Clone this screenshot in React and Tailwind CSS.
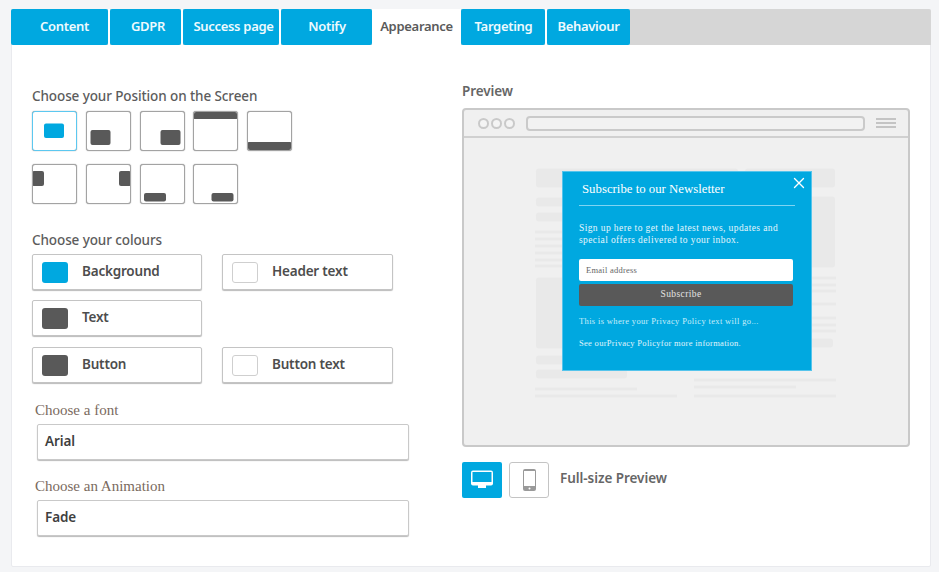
import React from "react";
import { X } from "lucide-react";

const BLUE = "#00a8e0";
const DARK = "#595959";

const TABS = [
  { label: "Content", w: "w-[97px]", pl: "pl-[10px]", gap: true },
  { label: "GDPR", w: "w-[71px]", pl: "pl-[5px]", gap: true },
  { label: "Success page", w: "w-[96px]", pl: "pl-[5px]", gap: true },
  { label: "Notify", w: "w-[91px]", pl: "pl-[1px]" },
  { label: "Appearance", w: "w-[89px]", active: true },
  { label: "Targeting", w: "w-[84px]", pl: "pl-[1px]", gap: true },
  { label: "Behaviour", w: "w-[83px]" },
];

// x, y, w, h of the dark block inside each 45x40 tile
const TILES_TOP = [
  { r: [12, 12.5, 20, 14.5], active: true },
  { r: [4.5, 19, 20, 15] },
  { r: [20.5, 19, 20, 15] },
  { r: [0, 0, 45, 8] },
  { r: [0, 31, 45, 9] },
];
const TILES_BOTTOM = [
  { r: [0, 7, 12, 15] },
  { r: [33, 7, 12, 15] },
  { r: [4, 29, 22, 8.5] },
  { r: [18.5, 29, 22, 8.5] },
];

function Tile({ r, active }) {
  return (
    <button
      className={`w-[45px] h-[40px] bg-white rounded-[3px] overflow-hidden border shadow-[0_0_1px_#777] ${
        active ? "border-[#5cc8f0]" : "border-[#a3a3a3]"
      }`}
    >
      <svg width="45" height="40" viewBox="0 0 45 40" className="block -m-px">
        <rect x={r[0]} y={r[1]} width={r[2]} height={r[3]} rx="2" fill={active ? BLUE : DARK} />
      </svg>
    </button>
  );
}

function ColourBtn({ label, colour }) {
  return (
    <div className="w-full h-[36px] flex items-center bg-white border border-[#c4c4c4] rounded-[2px] shadow-[0_1px_1px_#bbb]">
      <span
        className={`w-[26px] h-[21px] ml-[9px] rounded-[3px] ${colour ? "" : "border border-[#cfcfcf]"}`}
        style={colour ? { background: colour } : undefined}
      />
      <span className="ml-[14px] pb-[1px] text-[13.5px] font-semibold text-[#4d4d4d] tracking-[-0.2px]">{label}</span>
    </div>
  );
}

function SelectBox({ value }) {
  return (
    <div className="ml-[5px] w-[372px] h-[36px] flex items-center pl-[7px] pb-[1px] bg-white border border-[#c9c9c9] rounded-[2px] shadow-[0_1px_1px_#bbb] text-[13.5px] font-semibold text-[#3f3f3f] tracking-[-0.1px]">
      {value}
    </div>
  );
}

// faint page wireframe behind the popup, in page coordinates
function Wireframe() {
  const blocks = [
    [536, 168, 202, 19], [745, 168, 90, 19], [536, 197, 90, 9], [536, 212, 90, 9], [745, 196, 90, 71],
    [536, 277, 90, 71], [536, 355, 90, 9], [536, 369, 91, 9], [740, 338, 93, 9],
  ];
  const lines = [
    [535, 230, 60], [535, 237, 60], [535, 244, 60], [535, 251, 60], [535, 258, 60], [535, 264, 60],
    [535, 387, 102], [535, 394, 142], [780, 276, 56], [780, 283, 56], [780, 289, 56], [780, 302, 56],
    [780, 316, 56], [780, 323, 56], [780, 329, 56], [694, 378, 142], [694, 385, 102], [694, 394, 142],
  ];
  return (
    <svg viewBox="464 138 444 306" className="absolute inset-0 w-full h-full">
      {blocks.map((b, i) => (
        <rect key={i} x={b[0]} y={b[1]} width={b[2]} height={b[3]} rx="3" fill="#e9e9e9" />
      ))}
      {lines.map((l, i) => (
        <rect key={i} x={l[0]} y={l[1]} width={l[2]} height="3" fill="#e9e9e9" />
      ))}
    </svg>
  );
}

function Popup() {
  const serif = { fontFamily: '"Liberation Serif", serif' };
  return (
    <div
      className="absolute left-[98px] top-[33px] w-[250px] h-[200px] bg-[#00a8e0] border border-[#55c4ec] text-white pl-[16px] pr-[18px]"
      style={serif}
    >
      <X className="absolute right-[3px] top-[2px] w-[18px] h-[18px]" strokeWidth={1.8} />
      <div className="h-[34px] pl-[3px] pt-[2px] flex items-center text-[12.8px] border-b border-[#7fd4f2] mr-[-2px]">
        Subscribe to our Newsletter
      </div>
      <p className="mt-[16px] text-[9.5px] leading-[12px] tracking-[0.4px] text-[#e6f6fc]">
        Sign up here to get the latest news, updates and special offers delivered to your inbox.
      </p>
      <div className="mt-[13px] h-[22px] bg-white rounded-[2px] flex items-center pl-[7px] text-[8.5px] tracking-[0.25px] text-[#666]">
        Email address
      </div>
      <div className="mt-[3px] pb-[2px] pr-[10px] h-[22px] bg-[#595959] rounded-[2px] flex items-center justify-center text-[9.5px] tracking-[0.4px] text-[#e4e4e4]">
        Subscribe
      </div>
      <p className="mt-[10px] text-[8.5px] tracking-[0.35px] leading-[11px] text-[#c9eefb]">
        This is where your Privacy Policy text will go...
      </p>
      <p className="mt-[11px] text-[8.5px] tracking-[0.3px] leading-[11px] text-[#e0f5fc]">
        See ourPrivacy Policyfor more information.
      </p>
    </div>
  );
}

function BrowserFrame() {
  return (
    <div className="w-[448px] h-[339px] flex flex-col bg-[#f0f0f0] border-2 border-[#c9c9c9] rounded-[4px]">
      <div className="h-[28px] shrink-0 flex items-center border-b-2 border-[#d0d0d0] pl-[14px] pr-[12px]">
        <span className="w-[11px] h-[11px] rounded-full bg-[#f4f4f4] border-2 border-[#c9c9c9]" />
        <span className="ml-[2px] w-[11px] h-[11px] rounded-full bg-[#f4f4f4] border-2 border-[#c9c9c9]" />
        <span className="ml-[2px] w-[11px] h-[11px] rounded-full bg-[#f4f4f4] border-2 border-[#c9c9c9]" />
        <span className="ml-[11px] flex-1 h-[15px] rounded-[4px] bg-[#f2f2f2] border-2 border-[#cacaca]" />
        <span className="ml-[11px] w-[20px] flex flex-col gap-[2px]">
          <span className="h-[2px] bg-[#c4c4c4]" />
          <span className="h-[2px] bg-[#c4c4c4]" />
          <span className="h-[2px] bg-[#c4c4c4]" />
        </span>
      </div>
      <div className="relative flex-1">
        <Wireframe />
        <Popup />
      </div>
    </div>
  );
}

export default function App() {
  return (
    <div
      className="w-[939px] h-[572px] overflow-hidden bg-[#f4f5f7] pt-[9px] pl-[11px]"
      style={{ fontFamily: '"Noto Sans", sans-serif' }}
    >
      <div className="w-[920px] h-[558px] bg-white border border-[#e9eaee] rounded-[2px]">
        {/* tabs */}
        <div className="h-[36px] -mx-px -mt-px flex bg-[#d6d6d6] rounded-t-[2px]">
          {TABS.map((t) => (
            <React.Fragment key={t.label}>
              <div
                className={`${t.w} ${t.pl || ""} h-full shrink-0 flex items-center justify-center text-[13px] font-semibold whitespace-nowrap tracking-[-0.3px] ${
                  t.active ? "bg-white text-[#5a5a5a]" : "bg-[#00a8e0] text-[#eefafe] rounded-[2px]"
                }`}
              >
                {t.label}
              </div>
              {t.gap && <span className="w-[2px] shrink-0 bg-white" />}
            </React.Fragment>
          ))}
        </div>

        <div className="flex pl-[20px]">
          {/* settings */}
          <div className="w-[430px] shrink-0 pt-[41px]">
            <h2 className="h-[20px] leading-[20px] text-[13.5px] font-medium text-[#5c5c5c] tracking-[-0.1px]">
              Choose your Position on the Screen
            </h2>
            <div className="mt-[5px] flex gap-[8.75px]">
              {TILES_TOP.map((t, i) => (
                <Tile key={i} {...t} />
              ))}
            </div>
            <div className="mt-[13px] flex gap-[8.75px]">
              {TILES_BOTTOM.map((t, i) => (
                <Tile key={i} {...t} />
              ))}
            </div>

            <h2 className="mt-[26px] h-[20px] leading-[20px] text-[13.5px] font-medium text-[#5c5c5c] tracking-[-0.1px]">
              Choose your colours
            </h2>
            <div className="mt-[4px] grid grid-cols-[170px_171px] gap-x-[20px]">
              <ColourBtn label="Background" colour={BLUE} />
              <ColourBtn label="Header text" />
              <div className="mt-[10px] col-span-2 w-[170px]">
                <ColourBtn label="Text" colour={DARK} />
              </div>
              <div className="mt-[11px]">
                <ColourBtn label="Button" colour={DARK} />
              </div>
              <div className="mt-[11px]">
                <ColourBtn label="Button text" />
              </div>
            </div>

            <div
              className="mt-[18px] ml-[3px] h-[18px] leading-[18px] text-[15px] text-[#7a6a5e]"
              style={{ fontFamily: '"Liberation Serif", serif' }}
            >
              Choose a font
            </div>
            <div className="mt-[5px]">
              <SelectBox value="Arial" />
            </div>
            <div
              className="mt-[17px] ml-[3px] h-[18px] leading-[18px] text-[15px] text-[#7a6a5e]"
              style={{ fontFamily: '"Liberation Serif", serif' }}
            >
              Choose an Animation
            </div>
            <div className="mt-[5px]">
              <SelectBox value="Fade" />
            </div>
          </div>

          {/* preview */}
          <div className="pt-[36px]">
            <h2 className="h-[20px] leading-[20px] text-[13.5px] font-semibold text-[#666] tracking-[-0.1px]">Preview</h2>
            <div className="mt-[7px]">
              <BrowserFrame />
            </div>
            <div className="mt-[15px] flex items-center">
              <button className="w-[40px] h-[36px] flex items-center justify-center bg-[#00a8e0] rounded-[2px]">
                <svg width="22" height="20" viewBox="0 0 22 20">
                  <rect x="0" y="0.5" width="22" height="15" rx="2" fill="#fff" />
                  <rect x="1.5" y="2" width="19" height="10" fill="#00a8e0" />
                  <rect x="7" y="15" width="8" height="3" fill="#fff" />
                </svg>
              </button>
              <button className="ml-[7px] w-[40px] h-[36px] flex items-center justify-center bg-white border border-[#c4c4c4] rounded-[3px]">
                <svg width="13" height="22" viewBox="0 0 13 22">
                  <rect x="0" y="0" width="13" height="22" rx="2" fill="#9a9a9a" />
                  <rect x="1" y="2" width="11" height="15" fill="#fff" />
                  <circle cx="6.5" cy="19.5" r="1" fill="#fff" />
                </svg>
              </button>
              <span className="ml-[11px] pb-[4px] text-[13.5px] font-semibold text-[#666] tracking-[-0.05px]">Full-size Preview</span>
            </div>
          </div>
        </div>
      </div>
    </div>
  );
}
